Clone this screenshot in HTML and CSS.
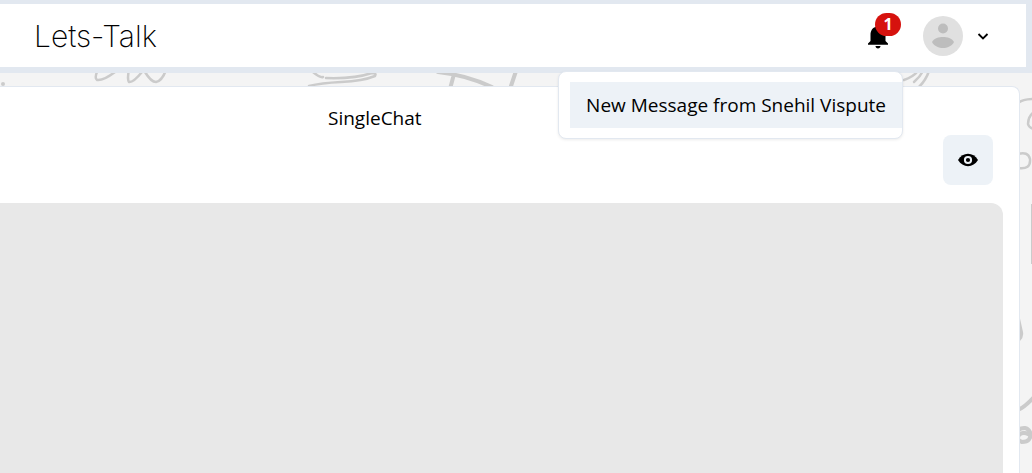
FILE: index.html
```html
<!DOCTYPE html>
<html lang="en">
<head>
<meta charset="utf-8">
<title>Lets-Talk</title>
<link rel="stylesheet" href="styles.css">
</head>
<body>
<svg class="doodles" viewBox="0 0 1032 473" preserveAspectRatio="xMaxYMin slice" aria-hidden="true">
  <g fill="none" stroke="#cbcbcb" stroke-width="2.500" stroke-linecap="round" stroke-linejoin="round">
    <path d="M98 70q-4 8-1 10q6 1 18-8M129 70q-2 9 0 12q4 1 13-10q2-2 3 0q6 10 11 10q6-1 10-12"/>
    <path d="M313 72q7 6 10 5M326 78q28 1 46-5q5 0 3 3q-12 5-34 6q-20 1-32 4"/>
    <path d="M438 72q28 3 54 15M454 74l-4 15M516 71l-6 18" stroke-width="4"/>
    <path d="M904 80q9-3 14-9M914 82q6-5 9-11M919 87q7-7 10-16"/>
    <path d="M1018 103q5-4 16-4M1034 112q-6 4-6 12q1 4 6 5M1018 154q10-3 12 5q1 11-12 9"/>
    <path d="M1018 410q7-3 16-13M1018 430q8-5 12 2q2 10-8 10q-6-2-3-7q5-5 14 2" stroke-width="4"/>
  </g>
  <path d="M1019 314l4 18q1 5-3 9l-2-2zM1031 204h1v60h-1z" fill="#cbcbcb"/>
  <circle cx="3" cy="84" r="2" fill="#cbcbcb"/>
</svg>

<header class="topbar">
  <h1 class="brand">Lets-Talk</h1>
  <div class="actions">
    <div class="notify">
      <button class="bell" type="button" aria-label="Notifications, 1 new">
        <svg viewBox="0 0 24 24" aria-hidden="true"><path d="M12 22c1.100 0 2-.9 2-2h-4c0 1.100.9 2 2 2zm6-6v-5c0-3.070-1.640-5.640-4.500-6.320V4c0-.83-.67-1.500-1.500-1.500s-1.500.67-1.500 1.500v.68C7.630 5.360 6 7.920 6 11v5l-2 2v1h16v-1l-2-2z"/></svg>
        <span class="badge">1</span>
      </button>
      <div class="menu" role="menu">
        <button class="menu-item" type="button" role="menuitem">New Message from Snehil Vispute</button>
      </div>
    </div>
    <button class="profile" type="button" aria-label="Account">
      <svg class="avatar" viewBox="0 0 40 40" aria-hidden="true">
        <circle cx="20" cy="20" r="20" fill="#e0e0e0"/>
        <circle cx="20" cy="12.500" r="5" fill="#bdbdbd"/>
        <path d="M9 26c2-4 7-5 11-5s9 1 11 5c-2 4-7 6-11 6s-9-2-11-6z" fill="#bdbdbd"/>
      </svg>
      <svg class="chevron" viewBox="0 0 20 20" aria-hidden="true"><path d="M5.500 8l4.500 4.500L14.500 8" fill="none" stroke="#000" stroke-width="1.800"/></svg>
    </button>
  </div>
</header>

<main class="chat">
  <div class="chat-head">
    <h2 class="chat-title">SingleChat</h2>
    <button class="view" type="button" aria-label="View profile">
      <svg viewBox="0 0 20 20" aria-hidden="true">
        <path d="M0 10C2.500 6 6 3.800 10 3.800S17.500 6 20 10C17.500 14 14 16.200 10 16.200S2.500 14 0 10z"/>
        <circle cx="10" cy="10" r="3.100" fill="#000" stroke="#edf2f7" stroke-width="2"/>
      </svg>
    </button>
  </div>
  <section class="messages" aria-label="Messages"></section>
</main>
</body>
</html>
```
FILE: styles.css
```css
* { box-sizing: border-box; }

body {
  margin: 0;
  min-height: 100vh;
  display: flex;
  flex-direction: column;
  position: relative;
  overflow: hidden;
  background: #f4f4f4;
  color: #000;
  font: 19px/30px "Open Sans", "Noto Sans", sans-serif;
}

button {
  border: 0;
  padding: 0;
  background: none;
  color: inherit;
  font: inherit;
  cursor: pointer;
}

svg { display: block; }

.doodles {
  position: absolute;
  inset: 0;
  width: 100%;
  height: 100%;
}

.topbar {
  position: relative;
  z-index: 2;
  display: flex;
  align-items: center;
  justify-content: space-between;
  padding: 12px 17px 11px 34px;
  background: #fff;
  border: solid #e2e8f0;
  border-width: 4px 6px 6px 0;
}

.brand {
  margin: 0;
  font: 200 30px/40px Inter, sans-serif;
}

.actions, .profile { display: flex; align-items: center; }

.notify { position: relative; padding: 0 14px 0 4px; }

.bell { display: block; position: relative; }

.bell svg { width: 30px; height: 30px; }

.badge {
  position: absolute;
  left: 12px;
  top: -8px;
  width: 26px;
  height: 23px;
  border-radius: 12px;
  background: #d6120e;
  color: #fff;
  font-size: 16px;
  line-height: 23px;
  font-weight: 700;
}

.menu {
  position: absolute;
  right: 4px;
  top: calc(100% + 20px);
  padding: 10px 0 10px 11px;
  background: #fff;
  border: 1px solid #e2e8f0;
  border-radius: 8px;
  box-shadow: 0 1px 3px rgba(0, 0, 0, 0.08);
}

.menu-item {
  display: block;
  padding: 8px 16px;
  background: #edf2f7;
  white-space: nowrap;
}

.profile { gap: 10px; padding: 0 16px; }
.avatar { width: 40px; height: 40px; }
.chevron { width: 20px; height: 20px; }

.chat {
  position: relative;
  flex: 1;
  display: flex;
  flex-direction: column;
  margin: 13px 12px 0 0;
  padding: 16px 16px 0 0;
  background: #fff;
  border: solid #e2e8f0;
  border-width: 1px 1px 0 0;
  border-radius: 0 8px 0 0;
}

.chat-head {
  display: flex;
  flex-direction: column;
  padding: 0 10px 18px 0;
}

.chat-title {
  margin: 0 0 2px 328px;
  font-size: 19px;
  line-height: 30px;
  font-weight: 400;
}

.view {
  align-self: flex-end;
  display: grid;
  place-items: center;
  width: 50px;
  height: 50px;
  border-radius: 8px;
  background: #edf2f7;
}

.view svg { width: 20px; height: 20px; }

.messages {
  flex: 1;
  background: #e8e8e8;
  border-radius: 0 12px 0 0;
}
```
